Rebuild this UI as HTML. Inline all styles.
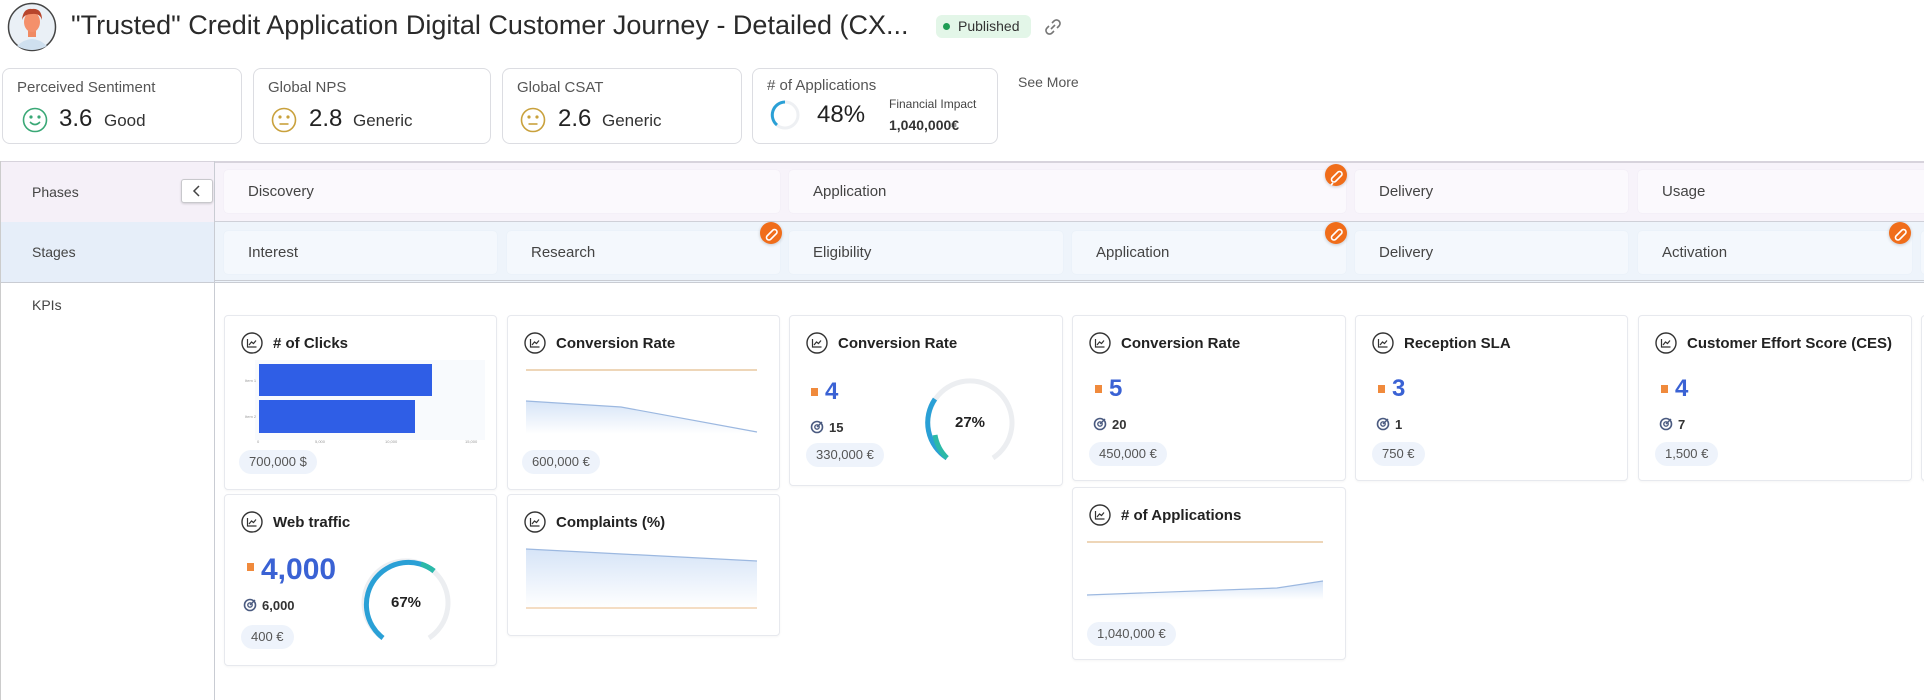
<!DOCTYPE html>
<html><head><meta charset="utf-8">
<style>
*{box-sizing:border-box;margin:0;padding:0}
body{width:1924px;height:700px;overflow:hidden;background:#fff;font-family:"Liberation Sans",Arial,sans-serif;color:#333;position:relative}
.a{position:absolute}
.kc{position:absolute;top:68px;height:76px;border:1px solid #dcdde2;border-radius:8px;background:#fff}
.kl{position:absolute;left:14px;top:10px;font-size:15px;color:#555}
.kv{position:absolute;top:36px;font-size:24px;color:#222}
.ks{position:absolute;top:42px;font-size:17px;color:#333}
.cell{position:absolute;height:43px;border-radius:4px;font-size:15px;color:#444;padding:13px 0 0 24px}
.ph{background:#fbf9fd;top:170px;box-shadow:0 0 1px #e6e1ec}
.st{background:#f4f8fd;top:231px;box-shadow:0 0 1px #dde6f1}
.badge{position:absolute;width:22px;height:22px;border-radius:50%;background:#f06d1a;box-shadow:0 1px 3px rgba(0,0,0,.2)}
.card{position:absolute;background:#fff;border:1px solid #e7e9ee;border-radius:4px;box-shadow:0 1px 2px rgba(0,0,0,.04)}
.ct{position:absolute;left:48px;top:19px;font-size:15px;font-weight:bold;color:#222}
.ci{position:absolute;left:16px;top:16px;width:22px;height:22px}
.pill{position:absolute;height:24px;border-radius:12px;background:#eef3fb;font-size:13px;color:#555;padding:4px 10px}
.big{position:absolute;font-size:24px;font-weight:bold;color:#3a62d4}
.sq{position:absolute;width:7px;height:8px;background:#f08a3c}
.tg{position:absolute;font-size:13px;font-weight:bold;color:#333}
</style></head><body>
<svg class="a" style="left:7px;top:2px" width="50" height="50" viewBox="0 0 50 50"><circle cx="25" cy="25" r="23.5" fill="#eaf0f6" stroke="#444" stroke-width="1.5"/><path d="M10 44 Q25 30 40 44 Q25 52 10 44Z" fill="#cfe0ef"/><rect x="21" y="26" width="8" height="9" fill="#f08a62"/><ellipse cx="25" cy="20" rx="8" ry="10" fill="#f4906b"/><path d="M15 18 Q16 6 25 7 Q35 6 35 18 Q33 11 25 12 Q17 12 15 18Z" fill="#b8452c"/></svg>
<div class="a" style="left:71px;top:10px;font-size:27px;color:#2a2a2a;white-space:nowrap">"Trusted" Credit Application Digital Customer Journey - Detailed (CX...</div>
<div class="a" style="left:936px;top:15px;width:95px;height:23px;border-radius:6px;background:#e3f6e8;font-size:14px;color:#333;padding:3px 0 0 22px">Published</div>
<div class="a" style="left:943px;top:23px;width:7px;height:7px;border-radius:50%;background:#1f9d55"></div>
<svg class="a" style="left:1042px;top:16px" width="22" height="22" viewBox="0 0 22 22" fill="none" stroke="#777" stroke-width="1.6"><path d="M9 13 L13 9"/><path d="M10 7 L12 5 a3.5 3.5 0 0 1 5 5 L15 12"/><path d="M12 15 L10 17 a3.5 3.5 0 0 1 -5 -5 L7 10"/></svg>

<div class="kc" style="left:2px;width:240px"><div class="kl">Perceived Sentiment</div>
<svg class="a" style="left:19px;top:38px" width="26" height="26" viewBox="0 0 26 26" fill="none" stroke="#3aa876" stroke-width="1.6"><circle cx="13" cy="13" r="11.5"/><circle cx="9" cy="10" r=".8" fill="#3aa876"/><circle cx="17" cy="10" r=".8" fill="#3aa876"/><path d="M8 15 Q13 20 18 15"/></svg>
<div class="kv" style="left:56px">3.6</div><div class="ks" style="left:101px">Good</div></div>
<div class="kc" style="left:253px;width:238px"><div class="kl">Global NPS</div>
<svg class="a" style="left:17px;top:38px" width="26" height="26" viewBox="0 0 26 26" fill="none" stroke="#c9a13c" stroke-width="1.6"><circle cx="13" cy="13" r="11.5"/><circle cx="9" cy="10" r=".8" fill="#c9a13c"/><circle cx="17" cy="10" r=".8" fill="#c9a13c"/><path d="M8.5 17 H17.5"/></svg>
<div class="kv" style="left:55px">2.8</div><div class="ks" style="left:99px">Generic</div></div>
<div class="kc" style="left:502px;width:240px"><div class="kl">Global CSAT</div>
<svg class="a" style="left:17px;top:38px" width="26" height="26" viewBox="0 0 26 26" fill="none" stroke="#c9a13c" stroke-width="1.6"><circle cx="13" cy="13" r="11.5"/><circle cx="9" cy="10" r=".8" fill="#c9a13c"/><circle cx="17" cy="10" r=".8" fill="#c9a13c"/><path d="M8.5 17 H17.5"/></svg>
<div class="kv" style="left:55px">2.6</div><div class="ks" style="left:99px">Generic</div></div>
<div class="kc" style="left:752px;width:246px"><div class="kl" style="top:8px">#&nbsp;of Applications</div>
<svg class="a" style="left:16px;top:30px" width="32" height="32" viewBox="0 0 32 32" fill="none" stroke-width="3"><circle cx="16" cy="16" r="13" stroke="#eef0f3"/><path d="M16 3 A13 13 0 0 0 8 26" stroke="#2aa0d6"/></svg>
<div class="kv" style="left:64px;top:32px">48%</div>
<div class="a" style="left:136px;top:28px;font-size:12px;color:#444">Financial Impact</div>
<div class="a" style="left:136px;top:48px;font-size:14px;font-weight:bold;color:#333">1,040,000€</div></div>
<div class="a" style="left:1018px;top:74px;font-size:14px;color:#555">See More</div>

<div class="a" style="left:0;top:161px;width:1924px;height:61px;background:#f7f3fa;border-top:2px solid #d7d3dc;border-bottom:1px solid #cfd0d8"></div>
<div class="a" style="left:0;top:222px;width:1924px;height:61px;background:#eef4fb;border-bottom:3px double #c9ccd3"></div>
<div class="a" style="left:0;top:162px;width:215px;height:60px;background:#f5f0f8"></div>
<div class="a" style="left:0;top:222px;width:215px;height:61px;background:#e6eef9;border-bottom:1px solid #c9ccd3"></div>
<div class="a" style="left:0;top:161px;width:1px;height:539px;background:#ccc"></div>
<div class="a" style="left:214px;top:161px;width:1px;height:539px;background:#c9ccd3"></div>
<div class="a" style="left:32px;top:184px;font-size:14px;color:#444">Phases</div>
<div class="a" style="left:32px;top:244px;font-size:14px;color:#444">Stages</div>
<div class="a" style="left:32px;top:297px;font-size:14px;color:#444">KPIs</div>
<div class="a" style="left:181px;top:179px;width:32px;height:24px;background:#fff;border:1px solid #c8c8cc;border-radius:3px;box-shadow:0 1px 2px rgba(0,0,0,.15)"><svg width="30" height="22" viewBox="0 0 30 22" fill="none" stroke="#444" stroke-width="1.5"><path d="M17 6 L12 11 L17 16"/></svg></div>

<div class="cell ph" style="left:224px;width:556px">Discovery</div>
<div class="cell ph" style="left:789px;width:557px">Application</div>
<div class="cell ph" style="left:1355px;width:273px">Delivery</div>
<div class="cell ph" style="left:1638px;width:290px">Usage</div>
<div class="cell st" style="left:224px;width:273px">Interest</div>
<div class="cell st" style="left:507px;width:273px">Research</div>
<div class="cell st" style="left:789px;width:274px">Eligibility</div>
<div class="cell st" style="left:1072px;width:274px">Application</div>
<div class="cell st" style="left:1355px;width:273px">Delivery</div>
<div class="cell st" style="left:1638px;width:274px">Activation</div>
<div class="cell st" style="left:1921px;width:20px"></div>

<div class="badge" style="left:1325px;top:164px"></div>
<div class="badge" style="left:760px;top:222px"></div>
<div class="badge" style="left:1325px;top:222px"></div>
<div class="badge" style="left:1889px;top:222px"></div>
<svg class="a" style="left:0;top:0" width="1924" height="300" fill="none" stroke="#fff" stroke-width="1.6">
<path d="M1332 178 l6 -6 a2.5 2.5 0 0 1 3.5 3.5 l-6 6 a2.5 2.5 0 0 1 -3.5 -3.5z M1333 183 l-2 2"/>
<path d="M767 236 l6 -6 a2.5 2.5 0 0 1 3.5 3.5 l-6 6 a2.5 2.5 0 0 1 -3.5 -3.5z"/>
<path d="M1332 236 l6 -6 a2.5 2.5 0 0 1 3.5 3.5 l-6 6 a2.5 2.5 0 0 1 -3.5 -3.5z"/>
<path d="M1896 236 l6 -6 a2.5 2.5 0 0 1 3.5 3.5 l-6 6 a2.5 2.5 0 0 1 -3.5 -3.5z"/>
</svg>

<svg width="0" height="0" style="position:absolute"><defs><symbol id="ic" viewBox="0 0 22 22"><circle cx="11" cy="11" r="10" fill="none" stroke="#333" stroke-width="1.4"/><path d="M6.5 7 V15 H15.5 M8 13 L10.5 10 L12.5 11.5 L15 8.5" fill="none" stroke="#333" stroke-width="1.2"/></symbol>
<symbol id="tg" viewBox="0 0 14 14"><circle cx="7" cy="7" r="5.5" fill="none" stroke="#4a5a80" stroke-width="1.6"/><circle cx="7" cy="7" r="2.2" fill="none" stroke="#4a5a80" stroke-width="1.4"/><path d="M7 7 L12 2" stroke="#4a5a80" stroke-width="1.4"/></symbol></defs></svg>

<div class="card" style="left:224px;top:315px;width:273px;height:175px">
<svg class="ci"><use href="#ic"/></svg><div class="ct"># of Clicks</div>
<svg class="a" style="left:20px;top:44px" width="240" height="100" viewBox="0 0 240 100"><rect x="10" y="0" width="232" height="80" fill="#f8fafd"/><rect x="14" y="4" width="173" height="32" fill="#2f5ee6"/><rect x="14" y="40" width="156" height="33" fill="#2f5ee6"/><text x="0" y="22" font-size="4" fill="#999" font-family="Liberation Sans">Item 1</text><text x="0" y="58" font-size="4" fill="#999" font-family="Liberation Sans">Item 2</text><text x="12" y="83" font-size="4" fill="#999" font-family="Liberation Sans">0</text><text x="70" y="83" font-size="4" fill="#999" font-family="Liberation Sans">5,000</text><text x="140" y="83" font-size="4" fill="#999" font-family="Liberation Sans">10,000</text><text x="220" y="83" font-size="4" fill="#999" font-family="Liberation Sans">15,000</text></svg>
<div class="pill" style="left:14px;top:134px">700,000 $</div></div>

<div class="card" style="left:224px;top:494px;width:273px;height:172px">
<svg class="ci"><use href="#ic"/></svg><div class="ct">Web traffic</div>
<div class="sq" style="left:22px;top:68px"></div><div class="big" style="left:36px;top:58px;font-size:30px">4,000</div>
<svg class="a" style="left:18px;top:103px" width="14" height="14"><use href="#tg"/></svg><div class="tg" style="left:37px;top:103px">6,000</div>
<div class="pill" style="left:16px;top:130px">400 €</div>
<svg class="a" style="left:134px;top:60px" width="94" height="94" viewBox="0 0 94 94" fill="none" stroke-width="5"><path d="M24 83 A42 42 0 1 1 70 83" stroke="#eceef1"/><path d="M24 83 A42 42 0 0 1 75 16" stroke="#2aa0d6"/><path d="M62 9 A42 42 0 0 1 75 16" stroke="#2cb9a8"/><text x="47" y="52" text-anchor="middle" font-size="15" font-weight="bold" fill="#222" stroke="none" font-family="Liberation Sans">67%</text></svg></div>

<div class="card" style="left:507px;top:315px;width:273px;height:175px">
<svg class="ci"><use href="#ic"/></svg><div class="ct">Conversion Rate</div>
<svg class="a" style="left:10px;top:48px" width="250" height="80" viewBox="0 0 250 80"><defs><linearGradient id="g1" x1="0" y1="0" x2="0" y2="1"><stop offset="0" stop-color="#d6e4f7"/><stop offset="1" stop-color="#fff"/></linearGradient></defs><path d="M8 37 L103 43 L239 68 V70 H8Z" fill="url(#g1)"/><path d="M8 37 L103 43 L239 68" stroke="#9cb8e0" fill="none" stroke-width="1.2"/><path d="M8 6 H239" stroke="#e8c9a0" stroke-width="1.5"/></svg>
<div class="pill" style="left:14px;top:134px">600,000 €</div></div>

<div class="card" style="left:507px;top:494px;width:273px;height:142px">
<svg class="ci"><use href="#ic"/></svg><div class="ct">Complaints (%)</div>
<svg class="a" style="left:10px;top:48px" width="250" height="80" viewBox="0 0 250 80"><path d="M8 6 L239 18 V65 H8Z" fill="url(#g1)"/><path d="M8 6 L239 18" stroke="#9cb8e0" fill="none" stroke-width="1.2"/><path d="M8 65 H239" stroke="#f0d2b0" stroke-width="1.5"/></svg></div>

<div class="card" style="left:789px;top:315px;width:274px;height:171px">
<svg class="ci"><use href="#ic"/></svg><div class="ct">Conversion Rate</div>
<div class="sq" style="left:21px;top:72px"></div><div class="big" style="left:35px;top:62px">4</div>
<svg class="a" style="left:20px;top:104px" width="14" height="14"><use href="#tg"/></svg><div class="tg" style="left:39px;top:104px">15</div>
<div class="pill" style="left:16px;top:127px">330,000 €</div>
<svg class="a" style="left:133px;top:59px" width="94" height="94" viewBox="0 0 94 94" fill="none" stroke-width="5"><path d="M24 83 A42 42 0 1 1 70 83" stroke="#eceef1"/><path d="M24 83 A42 42 0 0 1 12 24" stroke="#2aa0d6"/><path d="M24 83 A42 42 0 0 1 12 60" stroke="#2cb9a8"/><text x="47" y="52" text-anchor="middle" font-size="15" font-weight="bold" fill="#222" stroke="none" font-family="Liberation Sans">27%</text></svg></div>

<div class="card" style="left:1072px;top:315px;width:274px;height:166px">
<svg class="ci"><use href="#ic"/></svg><div class="ct">Conversion Rate</div>
<div class="sq" style="left:22px;top:69px"></div><div class="big" style="left:36px;top:59px">5</div>
<svg class="a" style="left:20px;top:101px" width="14" height="14"><use href="#tg"/></svg><div class="tg" style="left:39px;top:101px">20</div>
<div class="pill" style="left:16px;top:126px">450,000 €</div></div>

<div class="card" style="left:1072px;top:487px;width:274px;height:173px">
<svg class="ci"><use href="#ic"/></svg><div class="ct"># of Applications</div>
<svg class="a" style="left:8px;top:50px" width="256" height="75" viewBox="0 0 256 75"><path d="M6 57 L196 50 L242 43 V62 H6Z" fill="url(#g1)"/><path d="M6 57 L196 50 L242 43" stroke="#9cb8e0" fill="none" stroke-width="1.2"/><path d="M6 4 H242" stroke="#e8c9a0" stroke-width="1.5"/></svg>
<div class="pill" style="left:14px;top:134px">1,040,000 €</div></div>

<div class="card" style="left:1355px;top:315px;width:273px;height:166px">
<svg class="ci"><use href="#ic"/></svg><div class="ct">Reception SLA</div>
<div class="sq" style="left:22px;top:69px"></div><div class="big" style="left:36px;top:59px">3</div>
<svg class="a" style="left:20px;top:101px" width="14" height="14"><use href="#tg"/></svg><div class="tg" style="left:39px;top:101px">1</div>
<div class="pill" style="left:16px;top:126px">750 €</div></div>

<div class="card" style="left:1638px;top:315px;width:274px;height:166px">
<svg class="ci"><use href="#ic"/></svg><div class="ct">Customer Effort Score (CES)</div>
<div class="sq" style="left:22px;top:69px"></div><div class="big" style="left:36px;top:59px">4</div>
<svg class="a" style="left:20px;top:101px" width="14" height="14"><use href="#tg"/></svg><div class="tg" style="left:39px;top:101px">7</div>
<div class="pill" style="left:16px;top:126px">1,500 €</div></div>
<div class="card" style="left:1921px;top:315px;width:20px;height:166px"></div>
</body></html>
